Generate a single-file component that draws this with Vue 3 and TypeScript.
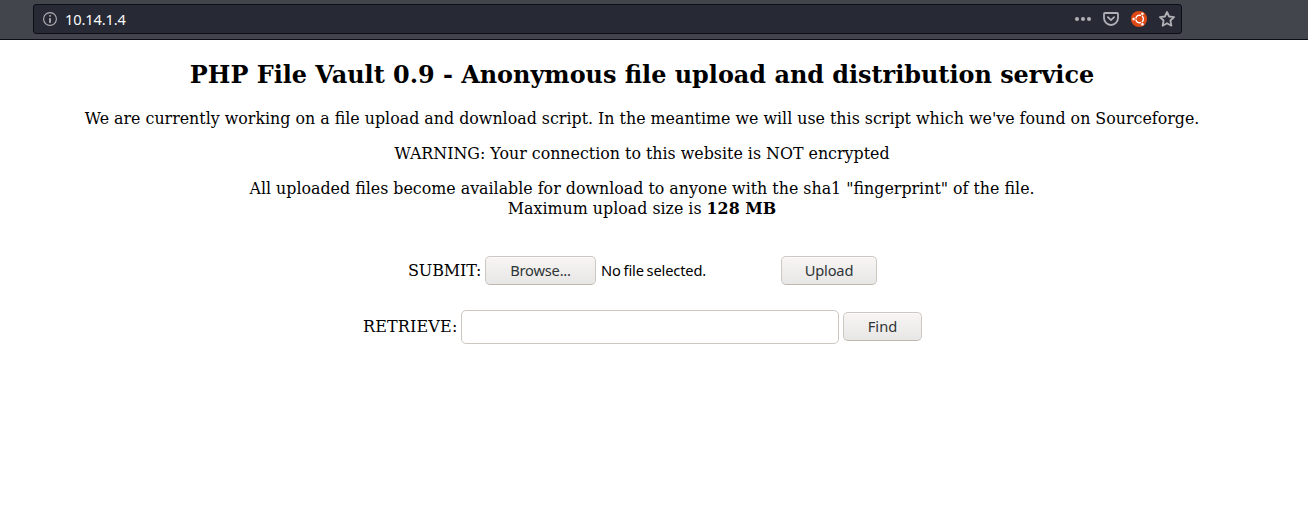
<script setup lang="ts">
const address: string = '10.14.1.4'
</script>

<template>
  <div class="window">
    <header class="toolbar">
      <div class="urlbar">
        <svg class="info" width="14" height="14" viewBox="0 0 14 14" fill="none">
          <circle cx="7" cy="7" r="6.4" stroke="#b1b1b5" stroke-width="1.1" />
          <rect x="6.1" y="3" width="1.8" height="1.8" rx=".7" fill="#b1b1b5" />
          <rect x="6.1" y="6" width="1.8" height="5" rx=".7" fill="#b1b1b5" />
        </svg>
        <span class="address">{{ address }}</span>
        <div class="actions">
          <svg width="18" height="18" viewBox="0 0 18 18" fill="#b1b1b5">
            <circle cx="3" cy="9" r="2" /><circle cx="9" cy="9" r="2" /><circle cx="15" cy="9" r="2" />
          </svg>
          <svg width="18" height="18" viewBox="0 0 18 18" fill="none" stroke="#b1b1b5" stroke-width="1.8" stroke-linecap="round" stroke-linejoin="round">
            <path d="M3 3H15Q16 3 16 4V8A7 7 0 0 1 2 8V4Q2 3 3 3Z" />
            <path d="M5.9 7.2L9 10.1L12.1 7.2" />
          </svg>
          <svg width="18" height="18" viewBox="0 0 18 18" fill="none">
            <circle cx="9" cy="9" r="8.1" fill="#dd4814" />
            <circle cx="9.6" cy="9" r="3.7" stroke="#fff" stroke-width="1.6" />
            <path d="M9.6 9H4.5M9.6 9L12.1 4.7M9.6 9L12.1 13.3" stroke="#dd4814" stroke-width="1" />
            <circle cx="9.6" cy="9" r="2.7" fill="#dd4814" />
            <g fill="#fff" stroke="#dd4814" stroke-width=".4">
              <circle cx="3.6" cy="9" r="1.5" /><circle cx="12.4" cy="3.8" r="1.5" /><circle cx="12.4" cy="14.2" r="1.5" />
            </g>
          </svg>
          <svg width="18" height="18" viewBox="0 0 18 18" fill="none" stroke="#b1b1b5" stroke-width="1.8" stroke-linejoin="round">
            <path d="M9 2L11.1 6.5L16.1 7.1L12.4 10.5L13.4 15.7L9 13.2L4.6 15.7L5.6 10.5L1.9 7.1L6.9 6.5Z" />
          </svg>
        </div>
      </div>
    </header>

    <main class="page">
      <h2>PHP File Vault 0.9 - Anonymous file upload and distribution service</h2>
      <p>We are currently working on a file upload and download script. In the meantime we will use this script which we've found on Sourceforge.</p>
      <p>WARNING: Your connection to this website is NOT encrypted</p>
      <p class="limits">All uploaded files become available for download to anyone with the sha1 "fingerprint" of the file.<br />Maximum upload size is <b>128 MB</b></p>

      <form class="row submit" @submit.prevent>
        <label>SUBMIT:</label>
        <button type="button" class="browse">Browse...</button>
        <span class="filename">No file selected.</span>
        <button type="submit" class="upload">Upload</button>
      </form>
      <form class="row retrieve" @submit.prevent>
        <label for="fingerprint">RETRIEVE:</label>
        <input id="fingerprint" type="text" />
        <button type="submit" class="find">Find</button>
      </form>
    </main>
  </div>
</template>

<style>
body {
  margin: 0;
  background: #fff;
}
</style>

<style scoped>
.window {
  height: 521px;
  overflow: hidden;
  background: #fff;
}
.toolbar {
  box-sizing: border-box;
  height: 40px;
  padding: 4px 0 0 33px;
  background: #42454c;
  border-bottom: 1px solid #0c0d15;
}
.urlbar {
  box-sizing: border-box;
  display: flex;
  align-items: center;
  width: 1149px;
  height: 30px;
  padding: 0 5px 0 9px;
  background: #272935;
  border: 1px solid #0c0d15;
  border-radius: 3px;
}
.address {
  margin-left: 8px;
  font: 14.67px/20px "Noto Sans", sans-serif;
  letter-spacing: -0.15px;
  color: #f9f9fa;
}
.actions {
  display: flex;
  gap: 10px;
  margin-left: auto;
}
.actions svg,
.info {
  display: block;
}
.page {
  box-sizing: border-box;
  width: 1284px;
  padding-top: 21px;
  font: 16px/19px "DejaVu Serif", serif;
  color: #000;
  text-align: center;
}
h2 {
  margin: 0 0 19px;
  font-size: 23.92px;
  line-height: 29px;
}
p {
  margin: 0 0 16px;
  font-size: 15.85px;
  white-space: nowrap;
}
.limits {
  line-height: 20px;
  margin-bottom: 0;
}
.row {
  display: flex;
  align-items: center;
}
.submit {
  height: 29px;
  margin-top: 37px;
  padding-left: 408px;
}
.retrieve {
  height: 34px;
  margin-top: 25px;
  padding-left: 363px;
}
.row label {
  text-align: left;
  white-space: nowrap;
}
.submit label {
  width: 77px;
  letter-spacing: -0.15px;
}
.retrieve label {
  width: 98px;
  margin-bottom: 2px;
  letter-spacing: 0.15px;
}
button {
  box-sizing: border-box;
  height: 29px;
  padding: 0;
  font: 14.67px/27px "Noto Sans", sans-serif;
  letter-spacing: -0.2px;
  color: #2e3436;
  background: linear-gradient(#f6f5f3, #e9e7e5);
  border: 1px solid #cdc7c2;
  border-bottom-color: #bfb8b1;
  border-radius: 5px;
  box-shadow: inset 0 1px #fbfafa;
}
.browse {
  width: 111px;
}
.filename {
  width: 180px;
  margin: 0 0 2px 5px;
  font: 14.67px/20px "Noto Sans", sans-serif;
  letter-spacing: -0.16px;
  word-spacing: -0.8px;
  text-align: left;
}
.upload {
  width: 96px;
}
input {
  box-sizing: border-box;
  width: 378px;
  height: 34px;
  padding: 0 8px;
  background: #fff;
  border: 1px solid #cdc7c2;
  border-radius: 5px;
  outline: none;
}
.find {
  width: 79px;
  margin: 0 0 1px 4px;
  letter-spacing: 0;
}
</style>
